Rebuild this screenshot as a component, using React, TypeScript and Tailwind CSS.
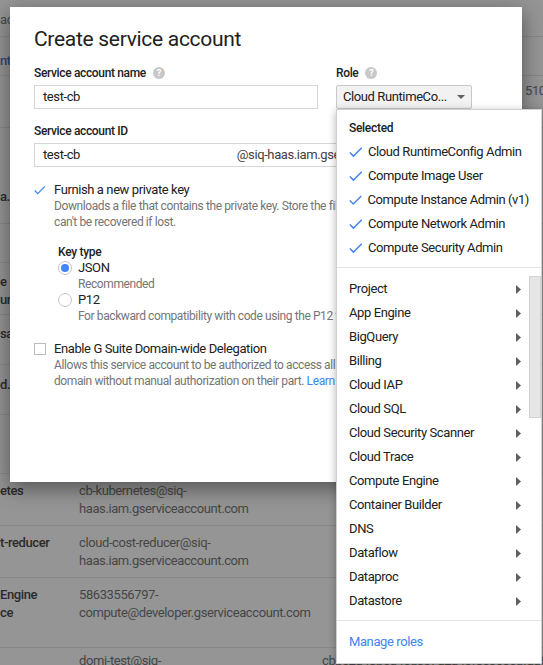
import React from "react";

const selectedRoles = [
  "Cloud RuntimeConfig Admin",
  "Compute Image User",
  "Compute Instance Admin (v1)",
  "Compute Network Admin",
  "Compute Security Admin",
];

const roleGroups = [
  "Project",
  "App Engine",
  "BigQuery",
  "Billing",
  "Cloud IAP",
  "Cloud SQL",
  "Cloud Security Scanner",
  "Cloud Trace",
  "Compute Engine",
  "Container Builder",
  "DNS",
  "Dataflow",
  "Dataproc",
  "Datastore",
];

const Help = () => (
  <span className="inline-flex h-3 w-3 items-center justify-center rounded-full bg-[#c8c8c8] text-[9px] font-bold leading-none tracking-normal text-white">
    ?
  </span>
);

const Check = ({ className = "" }: { className?: string }) => (
  <svg className={className} width="14" height="14" viewBox="3 4 19 16" fill="#4285f4">
    <path d="M9 16.17L4.83 12l-1.42 1.41L9 19 21 7l-1.41-1.41z" />
  </svg>
);

const Label = ({ children }: { children: React.ReactNode }) => (
  <div className="flex h-4 items-center gap-[7px] text-[12px] font-medium leading-4 tracking-[-0.35px] text-[#212121]">
    {children}
  </div>
);

const RoleMenu = () => (
  <div className="absolute left-0 top-full z-10 flex h-[555px] w-[206px] flex-col border border-[#d0d0d0] bg-white shadow-[0_2px_8px_rgba(0,0,0,0.3)]">
    <div className="border-b border-[#e4e4e4] pb-[7px] pt-[6px]">
      <div className="h-6 px-3 text-[12px] font-medium leading-6 tracking-[-0.3px] text-[#212121]">Selected</div>
      {selectedRoles.map((r) => (
        <div key={r} className="flex h-6 items-center gap-[5px] whitespace-nowrap px-3 text-[13px] text-[#212121]">
          <Check />
          {r}
        </div>
      ))}
    </div>
    <div className="flex h-[353px] border-b border-[#e4e4e4]">
      <div className="flex-1 pt-[9px]">
        {roleGroups.map((r) => (
          <div key={r} className="flex h-6 items-center justify-between whitespace-nowrap pl-3 pr-2 text-[13px] text-[#212121]">
            {r}
            <svg width="5" height="9" viewBox="0 0 5 9">
              <polygon points="0,0 5,4.5 0,9" fill="#5f5f5f" />
            </svg>
          </div>
        ))}
      </div>
      <div className="w-3 pt-2">
        <div className="h-[142px] border border-[#d2d2d2] bg-[#e6e6e6]" />
      </div>
    </div>
    <div className="px-3 pt-[13px] text-[13px] leading-4 text-[#4285f4]">Manage roles</div>
  </div>
);

const Dialog = () => (
  <div className="absolute left-[10px] top-[7px] h-[475px] w-[512px] bg-white pl-6 pt-[18px] shadow-[0_6px_20px_rgba(0,0,0,0.45)]">
    <h1 className="text-[21px] leading-[28px] tracking-[-0.3px] text-[#212121]">Create service account</h1>

    <div className="mt-3 flex gap-[18px]">
      <div className="w-[284px]">
        <Label>
          Service account name <Help />
        </Label>
        <div className="mt-1 h-6 border border-[#d6d6d6] px-2 text-[13px] leading-[22px] text-[#212121]">test-cb</div>
      </div>
      <div className="relative">
        <Label>
          Role <Help />
        </Label>
        <div className="mt-1 flex h-6 w-[136px] items-center justify-between rounded-[2px] border border-[#c8c8c8] bg-[#f2f2f2] pl-[6px] pr-[6px] text-[13px] text-[#212121]">
          <span>Cloud RuntimeCo...</span>
          <svg width="8" height="4" viewBox="0 0 8 4">
            <polygon points="0,0 8,0 4,4" fill="#616161" />
          </svg>
        </div>
        <RoleMenu />
      </div>
    </div>

    <div className="mt-[14px]">
      <Label>Service account ID</Label>
      <div className="mt-1 flex h-6 w-[412px] justify-between border border-[#d6d6d6] px-2 text-[13px] leading-[22px] text-[#212121]">
        <span>test-cb</span>
        <span className="text-[#424242]">@siq-haas.iam.gserviceaccount.com</span>
      </div>
    </div>

    <div className="mt-[15px] flex gap-2">
      <div className="mt-[2px] flex h-3 w-3 items-center justify-center">
        <Check />
      </div>
      <div>
        <div className="text-[13px] leading-4 text-[#212121]">Furnish a new private key</div>
        <div className="text-[12px] leading-4 tracking-[-0.4px] text-[#757575]">
          Downloads a file that contains the private key. Store the file securely because this key
          <br />
          can't be recovered if lost.
        </div>
      </div>
    </div>

    <div className="ml-6 mt-[14px]">
      <div className="text-[12px] font-medium leading-4 tracking-[-0.3px] text-[#212121]">Key type</div>
      <div className="flex gap-[6px]">
        <div className="mt-[1px] flex h-[14px] w-[14px] items-center justify-center rounded-full border border-[#c4c4c4]">
          <div className="h-[8px] w-[8px] rounded-full bg-[#4285f4]" />
        </div>
        <div>
          <div className="text-[13px] leading-4 text-[#212121]">JSON</div>
          <div className="text-[12px] leading-4 tracking-[-0.4px] text-[#757575]">Recommended</div>
        </div>
      </div>
      <div className="flex gap-[6px]">
        <div className="mt-[1px] h-[14px] w-[14px] rounded-full border border-[#c4c4c4]" />
        <div>
          <div className="text-[13px] leading-4 text-[#212121]">P12</div>
          <div className="whitespace-nowrap text-[12px] leading-4 tracking-[-0.4px] text-[#757575]">
            For backward compatibility with code using the P12 format
          </div>
        </div>
      </div>
    </div>

    <div className="mt-[17px] flex gap-2">
      <div className="mt-[2px] h-3 w-3 border border-[#bdbdbd]" />
      <div>
        <div className="text-[13px] leading-4 text-[#212121]">Enable G Suite Domain-wide Delegation</div>
        <div className="text-[12px] leading-4 tracking-[-0.4px] text-[#757575]">
          Allows this service account to be authorized to access all users' data on a G Suite
          <br />
          domain without manual authorization on their part. <span className="text-[#4285f4]">Learn more</span>
        </div>
      </div>
    </div>
  </div>
);

const Row = ({
  h,
  pt = 8,
  name,
  email,
  extra,
}: {
  h: string;
  pt?: number;
  name?: React.ReactNode;
  email?: React.ReactNode;
  extra?: React.ReactNode;
}) => (
  <div className={`flex border-b border-[#888888] text-[13px] leading-[18px] ${h}`} style={{ paddingTop: pt }}>
    <div className="w-[79px] shrink-0 font-medium text-[#2a2a2a]">{name}</div>
    <div className="w-[243px] shrink-0 whitespace-nowrap text-[#464646]">{email}</div>
    <div className="flex-1 whitespace-nowrap text-[#464646]">{extra}</div>
  </div>
);

export default function App() {
  return (
    <div className="relative h-[665px] w-[543px] overflow-hidden bg-[#959595] font-[Roboto,sans-serif] tracking-[-0.4px]">
      <div className="flex flex-col">
        <Row h="h-[37px]" pt={11} name={<span className="font-normal text-[#4a4a4a]">ac</span>} />
        <Row h="h-[39px]" pt={15} name={<span className="text-[#33466e]">nt</span>} />
        <Row h="h-[52px]" pt={6} extra={<span className="pl-[203px]">510</span>} />
        <Row h="h-[96px]" pt={60} name="a.s" />
        <Row h="h-[39px]" />
        <Row h="h-[52px]" pt={10} name={<>e<br />un</>} />
        <Row h="h-[50px]" pt={10} name="sa" />
        <Row h="h-[50px]" pt={11} name="d.t" />
        <Row h="h-[59px]" />
        <Row h="h-[52px]" name="etes" email={<>cb-kubernetes@siq-<br />haas.iam.gserviceaccount.com</>} />
        <Row h="h-[52px]" name="t-reducer" email={<>cloud-cost-reducer@siq-<br />haas.iam.gserviceaccount.com</>} />
        <Row h="h-[70px]" name={<>Engine<br />ce</>} email={<>58633556797-<br />compute@developer.gserviceaccount.com</>} />
        <Row h="h-[40px]" pt={4} email="domi-test@siq-" extra="cbbc2a48b6a4ed037a2a43f8e3c0edfaa6" />
      </div>
      <Dialog />
    </div>
  );
}
